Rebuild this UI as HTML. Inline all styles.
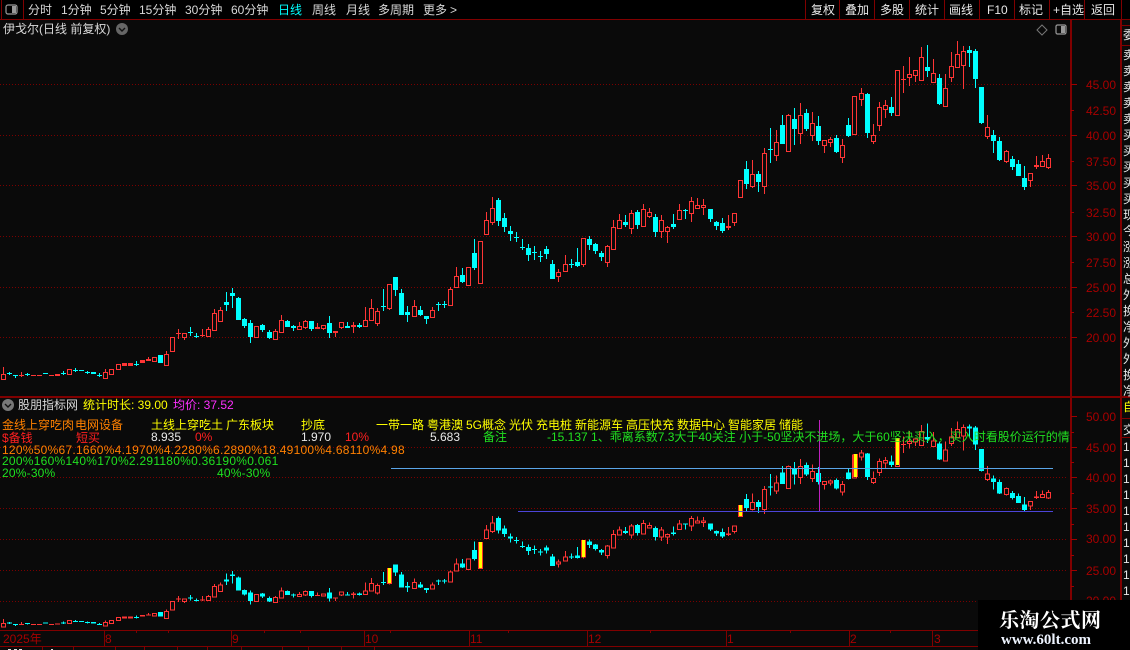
<!DOCTYPE html>
<html><head><meta charset="utf-8"><title>伊戈尔</title>
<style>
html,body{margin:0;padding:0;background:#0a0a0a}
#p{position:relative;width:1130px;height:650px;overflow:hidden;background:#0a0a0a;font-family:"Liberation Sans","WenQuanYi Zen Hei","Noto Sans CJK SC",sans-serif;font-size:12px;line-height:14px}
#bar{position:absolute;left:0;top:0;width:1130px;height:19px;background:#000}
svg{position:absolute;left:0;top:0}
.t{position:absolute;white-space:nowrap;line-height:14px}
.w{color:#d8d8d8}.c{color:#00ffff}.y{color:#ffff00}.o{color:#ff8000}.r{color:#ff2020}.g{color:#20e020}.m{color:#ff30ff}.a{color:#a80000}.b{color:#e8e8e8}
#side{position:absolute;left:1123px;top:20px;width:7px;height:610px;overflow:hidden}
#wm{position:absolute;left:978px;top:600px;width:152px;height:50px;background:#000}
</style></head><body><div id="p">
<div id="bar"></div>
<svg width="1130" height="650" viewBox="0 0 1130 650" shape-rendering="crispEdges">
<defs>
<g id="k" fill="none">
<path vector-effect="non-scaling-stroke" stroke="#ff3535" d="M3.5 367V379M21.5 372V377M19 375.5h5M31 375.5h5M37 375.5h5M49 375.5h5M105.5 369V378M148.5 357V361M166.5 351V365M172.5 351V352M178.5 329V339M176 333.5h5M184.5 337V340M202.5 329V337M200 335.5h5M208.5 327V337M214.5 309V331M220.5 307V321M256.5 337V338M275.5 329V339M281.5 315V332M299.5 322V329M305.5 320V329M317.5 323V329M323.5 328V330M335.5 333V337M341.5 327V329M353.5 322V333M365.5 307V326M371.5 299V320M377.5 308V326M389.5 308V310M414.5 300V317M432.5 307V318M450.5 287V305M456.5 267V287M486.5 212V235M492.5 197V225M558.5 269V282M565.5 255V271M583.5 264V267M607.5 245V267M613.5 220V249M619.5 214V228M631.5 210V234M643.5 204V226M649.5 208V218M661.5 215V238M667.5 226V243M679.5 204V220M691.5 197V222M697.5 198V208M703.5 199V215M728.5 215V230M734.5 222V226M752.5 160V188M764.5 148V194M776.5 130V161M788.5 114V151M800.5 103V144M812.5 112V141M824.5 145V153M830.5 137V147M842.5 139V163M854.5 134V135M861.5 88V106M873.5 124V144M879.5 102V131M885.5 100V118M903.5 66V93M901 79.5h5M909.5 57V86M915.5 75V82M921.5 47V81M933.5 59V82M945.5 74V106M951.5 52V82M957.5 41V67M963.5 46V89M987.5 115V139M1006.5 150V163M1030.5 180V187M1036.5 156V169M1042.5 155V167M1048.5 154V169"/>
<path fill="#ff3535" d="M55 374h5V376h-5zM122 363h5V366h-5zM128 363h5V366h-5zM140 360h5V363h-5zM146 359h5V361h-5zM315 327h5V329h-5zM333 331h5V333h-5zM351 325h5V327h-5zM726 226h5V228h-5zM1034 165h5V167h-5z"/>
<path vector-effect="non-scaling-stroke" fill="#0a0a0a" stroke="#ff3535" d="M1.5 374.5h4V379.5h-4zM67.5 369.5h4V374.5h-4zM103.5 372.5h4V378.5h-4zM109.5 369.5h4V374.5h-4zM116.5 364.5h4V369.5h-4zM152.5 357.5h4V361.5h-4zM164.5 354.5h4V365.5h-4zM170.5 337.5h4V351.5h-4zM182.5 333.5h4V337.5h-4zM206.5 329.5h4V336.5h-4zM212.5 313.5h4V330.5h-4zM218.5 310.5h4V321.5h-4zM254.5 326.5h4V337.5h-4zM273.5 331.5h4V339.5h-4zM279.5 320.5h4V332.5h-4zM297.5 326.5h4V329.5h-4zM303.5 321.5h4V327.5h-4zM321.5 325.5h4V328.5h-4zM339.5 322.5h4V327.5h-4zM363.5 320.5h4V326.5h-4zM369.5 308.5h4V320.5h-4zM375.5 311.5h4V323.5h-4zM387.5 284.5h4V308.5h-4zM412.5 306.5h4V316.5h-4zM430.5 310.5h4V317.5h-4zM448.5 289.5h4V305.5h-4zM454.5 276.5h4V287.5h-4zM466.5 267.5h4V285.5h-4zM478.5 241.5h4V283.5h-4zM484.5 220.5h4V234.5h-4zM490.5 208.5h4V222.5h-4zM556.5 272.5h4V276.5h-4zM563.5 264.5h4V271.5h-4zM581.5 238.5h4V264.5h-4zM605.5 246.5h4V262.5h-4zM611.5 227.5h4V249.5h-4zM617.5 220.5h4V228.5h-4zM629.5 213.5h4V228.5h-4zM641.5 209.5h4V226.5h-4zM647.5 212.5h4V216.5h-4zM659.5 220.5h4V231.5h-4zM665.5 227.5h4V231.5h-4zM677.5 210.5h4V219.5h-4zM689.5 201.5h4V213.5h-4zM695.5 205.5h4V208.5h-4zM701.5 205.5h4V207.5h-4zM732.5 213.5h4V222.5h-4zM738.5 180.5h4V197.5h-4zM750.5 174.5h4V186.5h-4zM762.5 153.5h4V186.5h-4zM774.5 142.5h4V155.5h-4zM786.5 115.5h4V151.5h-4zM798.5 115.5h4V133.5h-4zM810.5 123.5h4V135.5h-4zM822.5 140.5h4V145.5h-4zM828.5 139.5h4V142.5h-4zM840.5 145.5h4V157.5h-4zM852.5 96.5h4V134.5h-4zM859.5 93.5h4V99.5h-4zM871.5 135.5h4V141.5h-4zM877.5 107.5h4V125.5h-4zM883.5 105.5h4V109.5h-4zM895.5 70.5h4V115.5h-4zM907.5 74.5h4V77.5h-4zM913.5 70.5h4V75.5h-4zM919.5 57.5h4V80.5h-4zM931.5 73.5h4V82.5h-4zM943.5 88.5h4V106.5h-4zM949.5 66.5h4V77.5h-4zM955.5 54.5h4V67.5h-4zM961.5 51.5h4V65.5h-4zM985.5 127.5h4V136.5h-4zM1004.5 151.5h4V161.5h-4zM1028.5 173.5h4V180.5h-4zM1040.5 161.5h4V166.5h-4zM1046.5 158.5h4V167.5h-4z"/>
<path vector-effect="non-scaling-stroke" stroke="#00ffff" d="M9.5 372V375M7 373.5h5M15.5 375V378M13 375.5h5M27.5 373V376M25 374.5h5M43 373.5h5M63.5 371V375M61 373.5h5M75.5 368V372M73 370.5h5M79 370.5h5M87.5 371V374M85 372.5h5M99.5 373V377M97 375.5h5M136.5 361V366M134 364.5h5M190.5 327V336M188 332.5h5M196.5 333V338M194 336.5h5M226.5 292V311M232.5 288V308M238.5 297V320M244.5 318V328M250.5 320V343M262.5 324V332M269.5 330V339M287.5 320V327M293.5 325V331M311.5 321V331M329.5 316V338M347.5 322V328M359.5 323V328M383.5 289V311M381 306.5h5M395.5 277V296M401.5 289V315M407.5 306V322M420.5 306V316M426.5 316V324M438.5 302V311M436 304.5h5M444.5 301V308M442 304.5h5M462.5 268V283M474.5 239V270M498.5 198V226M504.5 213V232M510.5 226V241M516.5 232V242M514 237.5h5M522.5 239V250M520 247.5h5M528.5 244V261M534.5 246V260M532 252.5h5M540.5 251V262M538 256.5h5M546.5 246V259M552.5 260V279M571.5 259V268M569 264.5h5M577.5 248V267M589.5 236V250M595.5 243V254M601.5 251V261M625.5 215V227M637.5 210V229M655.5 214V237M673.5 214V229M685.5 209V219M683 210.5h5M710.5 209V222M716.5 221V230M722.5 218V233M746.5 161V189M758.5 171V192M770.5 128V163M768 149.5h5M782.5 115V144M794.5 108V145M806.5 109V131M818.5 116V145M836.5 135V153M848.5 118V137M867.5 93V138M891.5 97V116M927.5 45V77M939.5 74V105M969.5 46V67M975.5 49V88M981.5 87V124M993.5 130V153M999.5 137V161M1012.5 156V170M1018.5 160V176M1024.5 166V190"/>
<path fill="#00ffff" d="M91 372h5V374h-5zM158 355h5V363h-5zM224 302h5V305h-5zM230 293h5V296h-5zM236 298h5V320h-5zM242 319h5V326h-5zM248 323h5V337h-5zM260 325h5V330h-5zM267 332h5V338h-5zM285 321h5V327h-5zM291 326h5V328h-5zM309 321h5V329h-5zM327 323h5V333h-5zM345 326h5V328h-5zM357 325h5V327h-5zM393 277h5V290h-5zM399 293h5V315h-5zM405 312h5V315h-5zM418 310h5V315h-5zM424 316h5V319h-5zM460 275h5V282h-5zM472 253h5V268h-5zM496 200h5V221h-5zM502 218h5V227h-5zM508 231h5V234h-5zM526 248h5V255h-5zM544 249h5V254h-5zM550 264h5V279h-5zM575 262h5V266h-5zM587 239h5V245h-5zM593 244h5V251h-5zM599 253h5V257h-5zM623 222h5V225h-5zM635 212h5V225h-5zM653 217h5V232h-5zM671 224h5V227h-5zM708 209h5V219h-5zM714 222h5V226h-5zM720 223h5V231h-5zM744 169h5V184h-5zM756 174h5V182h-5zM780 125h5V144h-5zM792 119h5V129h-5zM804 113h5V129h-5zM816 126h5V141h-5zM834 138h5V152h-5zM846 125h5V136h-5zM865 94h5V133h-5zM889 107h5V113h-5zM925 67h5V71h-5zM937 78h5V104h-5zM967 50h5V53h-5zM973 51h5V79h-5zM979 87h5V123h-5zM991 135h5V141h-5zM997 141h5V160h-5zM1010 159h5V167h-5zM1016 164h5V176h-5zM1022 178h5V187h-5z"/>
</g>
</defs>
<path stroke="#7a0000" fill="none" stroke-dasharray="1 2" d="M0 84.5H1067M0 135.5H1067M0 185.5H1067M0 236.5H1067M0 287.5H1067M0 337.5H1067M0 447.5H1067M0 477.5H1067M0 508.5H1067M0 539.5H1067M0 570.5H1067M0 601.5H1067"/>
<path stroke="#800000" fill="none" d="M0 19.5H1130M1.5 0V19M23.5 0V19M805.5 0V19M839.5 0V19M874.5 0V19M909.5 0V19M944.5 0V19M979.5 0V19M1014.5 0V19M1049.5 0V19M1084.5 0V19M1121.5 0V19M1122 25.5H1130M1122 45.5H1130M1122 418.5H1130M1122 437.5H1130M0 630.5H1071M0 646.5H1130M104.5 631V646M231.5 631V646M364.5 631V646M469.5 631V646M587.5 631V646M726.5 631V646M849.5 631V646M932.5 631V646M136.5 631V633M168.5 631V633M264.5 631V633M300.5 631V633M390.5 631V633M508.5 631V633M650.5 631V633M790.5 631V633M890.5 631V633M42.5 647V650M73.5 647V650M115.5 647V650M144.5 647V650M177.5 647V650M207.5 647V650M241.5 647V650M282.5 647V650M308.5 647V650M341.5 647V650M374.5 647V650"/>
<path stroke="#800000" fill="none" stroke-width="2" d="M0 397H1130M1071 20V650M1121 20V650"/>
<path stroke="#a00000" fill="none" d="M1071 84.5h6M1071 110.5h3M1071 135.5h6M1071 161.5h3M1071 185.5h6M1071 212.5h3M1071 236.5h6M1071 262.5h3M1071 287.5h6M1071 312.5h3M1071 337.5h6M1071 416.5h6M1071 432.5h3M1071 447.5h6M1071 462.5h3M1071 477.5h6M1071 493.5h3M1071 508.5h6M1071 524.5h3M1071 539.5h6M1071 555.5h3M1071 570.5h6M1071 586.5h3M1071 601.5h6"/>
<use href="#k"/>
<use href="#k" transform="matrix(1 0 0 .607 0 396.4)"/>
<g>
<path fill="#ff3020" d="M387 568h5v15h-5zM478 542h5v26h-5zM581 540h5v17h-5zM738 505h5v11h-5zM853 454h5v23h-5zM895 438h5v27h-5z"/>
<path fill="#ffff00" d="M388 568h3v15h-3zM479 542h3v26h-3zM582 540h3v17h-3zM739 505h3v11h-3zM854 454h3v23h-3zM896 438h3v27h-3z"/>
</g>
<path stroke="#5aa5e8" fill="none" d="M391 468.5H1053"/>
<path stroke="#4c44d8" fill="none" d="M518 511.5H1053"/>
<path stroke="#c020c0" fill="none" d="M819.5 420V511"/>
<path stroke="#e0e0e0" fill="none" d="M8 649.5h3M14 649.5h3M19 649.5h3M51 649.5h2"/>
<g fill="none" shape-rendering="auto">
<rect x="6" y="5" width="11" height="9" rx="2" stroke="#999" stroke-width="1.2"/>
<rect x="12" y="6" width="4" height="7" fill="#999"/>
<circle cx="122" cy="29" r="6" fill="#666"/>
<path d="M119 28l3 3 3-3" stroke="#111" stroke-width="1.4"/>
<circle cx="8" cy="405" r="6" fill="#777"/>
<path d="M5 404l3 3 3-3" stroke="#111" stroke-width="1.4"/>
<path d="M1042 25l5 5-5 5-5-5z" stroke="#777"/>
<rect x="1056" y="25" width="10" height="9" rx="1.5" stroke="#999" stroke-width="1.2"/>
<rect x="1061" y="26" width="4" height="7" fill="#999"/>
</g>
</svg>

<span class="t w" style="left:28px;top:3px">分时</span>
<span class="t w" style="left:61px;top:3px">1分钟</span>
<span class="t w" style="left:100px;top:3px">5分钟</span>
<span class="t w" style="left:139px;top:3px">15分钟</span>
<span class="t w" style="left:185px;top:3px">30分钟</span>
<span class="t w" style="left:231px;top:3px">60分钟</span>
<span class="t c" style="left:278px;top:3px">日线</span>
<span class="t w" style="left:312px;top:3px">周线</span>
<span class="t w" style="left:346px;top:3px">月线</span>
<span class="t w" style="left:378px;top:3px">多周期</span>
<span class="t w" style="left:423px;top:3px">更多</span>
<span class="t w" style="left:450px;top:3px">&gt;</span>
<span class="t b" style="left:811px;top:3px">复权</span>
<span class="t b" style="left:845px;top:3px">叠加</span>
<span class="t b" style="left:880px;top:3px">多股</span>
<span class="t b" style="left:915px;top:3px">统计</span>
<span class="t b" style="left:949px;top:3px">画线</span>
<span class="t b" style="left:987px;top:3px">F10</span>
<span class="t b" style="left:1019px;top:3px">标记</span>
<span class="t b" style="left:1053px;top:3px">+自选</span>
<span class="t b" style="left:1091px;top:3px">返回</span>

<span class="t w" style="left:3px;top:22px">伊戈尔(日线 前复权)</span>

<span class="t a" style="left:1086px;top:78px">45.00</span>
<span class="t a" style="left:1086px;top:104px">42.50</span>
<span class="t a" style="left:1086px;top:129px">40.00</span>
<span class="t a" style="left:1086px;top:155px">37.50</span>
<span class="t a" style="left:1086px;top:179px">35.00</span>
<span class="t a" style="left:1086px;top:206px">32.50</span>
<span class="t a" style="left:1086px;top:230px">30.00</span>
<span class="t a" style="left:1086px;top:256px">27.50</span>
<span class="t a" style="left:1086px;top:281px">25.00</span>
<span class="t a" style="left:1086px;top:306px">22.50</span>
<span class="t a" style="left:1086px;top:331px">20.00</span>
<span class="t a" style="left:1086px;top:410px">50.00</span>
<span class="t a" style="left:1086px;top:441px">45.00</span>
<span class="t a" style="left:1086px;top:471px">40.00</span>
<span class="t a" style="left:1086px;top:502px">35.00</span>
<span class="t a" style="left:1086px;top:532px">30.00</span>
<span class="t a" style="left:1086px;top:564px">25.00</span>
<span class="t a" style="left:1086px;top:594px">20.00</span>

<span class="t w" style="left:18px;top:398px">股朋指标网</span>
<span class="t y" style="left:83px;top:398px">统计时长: 39.00</span>
<span class="t m" style="left:173px;top:398px">均价: 37.52</span>

<span class="t o" style="left:2px;top:418px">金线上穿吃肉</span>
<span class="t o" style="left:75px;top:418px">电网设备</span>
<span class="t y" style="left:151px;top:418px">土线上穿吃土</span>
<span class="t y" style="left:226px;top:418px">广东板块</span>
<span class="t y" style="left:301px;top:418px">抄底</span>
<span class="t y" style="left:376px;top:418px">一带一路</span>
<span class="t y" style="left:427px;top:418px">粤港澳</span>
<span class="t y" style="left:466px;top:418px">5G概念</span>
<span class="t y" style="left:509px;top:418px">光伏</span>
<span class="t y" style="left:536px;top:418px">充电桩</span>
<span class="t y" style="left:575px;top:418px">新能源车</span>
<span class="t y" style="left:626px;top:418px">高压快充</span>
<span class="t y" style="left:677px;top:418px">数据中心</span>
<span class="t y" style="left:728px;top:418px">智能家居</span>
<span class="t y" style="left:779px;top:418px">储能</span>

<span class="t r" style="left:2px;top:431px">$备钱</span>
<span class="t r" style="left:76px;top:431px">短买</span>
<span class="t b" style="left:151px;top:430px">8.935</span>
<span class="t r" style="left:195px;top:430px">0%</span>
<span class="t b" style="left:301px;top:430px">1.970</span>
<span class="t r" style="left:345px;top:430px">10%</span>
<span class="t b" style="left:430px;top:430px">5.683</span>
<span class="t g" style="left:483px;top:430px">备注</span>
<div class="t g" style="left:547px;top:430px;width:523px;overflow:hidden">-15.137 1、乖离系数7.3大于40关注 小于-50坚决不进场，大于60坚决买入，买入时看股价运行的情况</div>

<span class="t o" style="left:2px;top:443px;letter-spacing:.26px">120%50%67.1660%4.1970%4.2280%6.2890%18.49100%4.68110%4.98</span>
<span class="t g" style="left:2px;top:454px;letter-spacing:.26px">200%160%140%170%2.291180%0.36190%0.061</span>
<span class="t g" style="left:2px;top:466px;letter-spacing:.2px">20%-30%</span>
<span class="t g" style="left:217px;top:466px;letter-spacing:.2px">40%-30%</span>

<span class="t a" style="left:3px;top:632px">2025年</span>
<span class="t a" style="left:105px;top:632px">8</span>
<span class="t a" style="left:232px;top:632px">9</span>
<span class="t a" style="left:365px;top:632px">10</span>
<span class="t a" style="left:470px;top:632px">11</span>
<span class="t a" style="left:588px;top:632px">12</span>
<span class="t a" style="left:727px;top:632px">1</span>
<span class="t a" style="left:850px;top:632px">2</span>
<span class="t a" style="left:934px;top:632px">3</span>

<div id="side">
<span class="t b" style="left:0;top:8px">委</span>
<span class="t b" style="left:0;top:28px">卖</span>
<span class="t b" style="left:0;top:44px">卖</span>
<span class="t b" style="left:0;top:60px">卖</span>
<span class="t b" style="left:0;top:76px">卖</span>
<span class="t b" style="left:0;top:92px">卖</span>
<span class="t b" style="left:0;top:108px">买</span>
<span class="t b" style="left:0;top:124px">买</span>
<span class="t b" style="left:0;top:140px">买</span>
<span class="t b" style="left:0;top:156px">买</span>
<span class="t b" style="left:0;top:172px">买</span>
<span class="t b" style="left:0;top:188px">现</span>
<span class="t b" style="left:0;top:204px">今</span>
<span class="t b" style="left:0;top:220px">涨</span>
<span class="t b" style="left:0;top:236px">涨</span>
<span class="t b" style="left:0;top:252px">总</span>
<span class="t b" style="left:0;top:268px">外</span>
<span class="t b" style="left:0;top:284px">换</span>
<span class="t b" style="left:0;top:300px">净</span>
<span class="t b" style="left:0;top:316px">外</span>
<span class="t b" style="left:0;top:332px">外</span>
<span class="t b" style="left:0;top:348px">换</span>
<span class="t b" style="left:0;top:364px">净</span>
<span class="t y" style="left:0;top:380px">自</span>
<span class="t b" style="left:0;top:403px">交</span>
<span class="t b" style="left:0;top:420px">1</span>
<span class="t b" style="left:0;top:436px">1</span>
<span class="t b" style="left:0;top:452px">1</span>
<span class="t b" style="left:0;top:468px">1</span>
<span class="t b" style="left:0;top:484px">1</span>
<span class="t b" style="left:0;top:500px">1</span>
<span class="t b" style="left:0;top:516px">1</span>
<span class="t b" style="left:0;top:532px">1</span>
<span class="t b" style="left:0;top:548px">1</span>
<span class="t b" style="left:0;top:564px">1</span>
</div>

<div id="wm">
<span class="t" style="left:21px;top:8px;font:bold 20px/22px 'Noto Serif CJK SC','Liberation Serif',serif;color:#fff;letter-spacing:.5px">乐淘公式网</span>
<span class="t" style="left:23px;top:32px;font:bold 15px/16px 'Liberation Serif',serif;color:#eef4ff">www.60lt.com</span>
</div>
</div></body></html>
